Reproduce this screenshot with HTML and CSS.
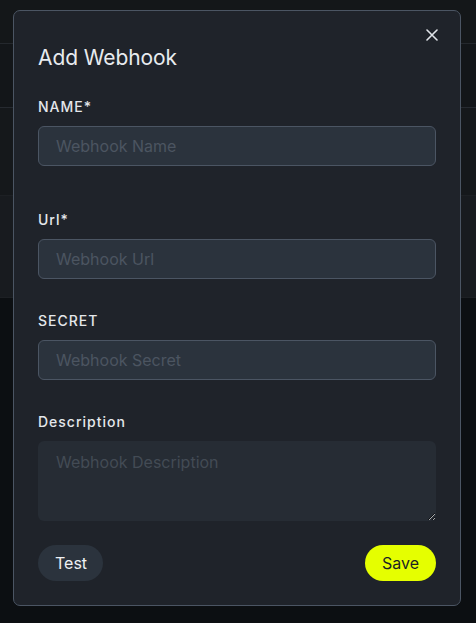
FILE: index.html
```html
<!DOCTYPE html>
<html lang="en">
<head>
<meta charset="utf-8">
<title>Add Webhook</title>
<link rel="stylesheet" href="styles.css">
</head>
<body>
<div class="stage">
  <div class="page">
    <div class="page-header"></div>
    <div class="page-toolbar"></div>
    <div class="page-row page-row-head"></div>
    <div class="page-row page-row-body"></div>
    <div class="page-rest"></div>
  </div>
  <div class="modal" role="dialog" aria-labelledby="modal-title">
    <button class="close" type="button" aria-label="Close">
      <svg viewBox="0 0 12 12" width="12" height="12" aria-hidden="true">
        <path d="M1 1 L11 11 M11 1 L1 11" stroke="#dfe3e8" stroke-width="1.6" stroke-linecap="round" fill="none"/>
      </svg>
    </button>
    <h2 class="title" id="modal-title">Add Webhook</h2>
    <div class="field field-first">
      <label class="label label-caps">NAME*</label>
      <input class="input" type="text" placeholder="Webhook Name">
    </div>
    <div class="field">
      <label class="label">Url*</label>
      <input class="input" type="text" placeholder="Webhook Url">
    </div>
    <div class="field">
      <label class="label label-caps">SECRET</label>
      <input class="input" type="text" placeholder="Webhook Secret">
    </div>
    <div class="field field-last">
      <label class="label">Description</label>
      <textarea class="textarea" placeholder="Webhook Description"></textarea>
    </div>
    <div class="actions">
      <button class="btn btn-test" type="button">Test</button>
      <button class="btn btn-save" type="button">Save</button>
    </div>
  </div>
</div>
</body>
</html>
```

FILE: styles.css
```css
* { box-sizing: border-box; }
html, body { margin: 0; padding: 0; }
body {
  width: 476px;
  height: 623px;
  overflow: hidden;
  background: #0c0f12;
  font-family: Inter, "Noto Sans", sans-serif;
}
.stage {
  display: grid;
  width: 476px;
  height: 623px;
}
.page, .modal { grid-area: 1 / 1; }

.page {
  display: flex;
  flex-direction: column;
}
.page-header {
  height: 44px;
  background: #141719;
  border-bottom: 1px solid #24282d;
}
.page-toolbar {
  height: 64px;
  background: #131619;
  border-bottom: 1px solid #262a30;
}
.page-row { background: #15181b; }
.page-row-head { height: 87px; }
.page-row-body {
  height: 103px;
  background: #181b1f;
  border-top: 1px solid #1d2024;
  border-bottom: 1px solid #1d2024;
}
.page-rest { flex: 1; background: #0c0f12; }

.modal {
  align-self: start;
  margin: 10px 15px 0 13px;
  width: 448px;
  height: 596px;
  background: #1f232a;
  border: 1px solid #4b5563;
  border-radius: 7px;
  padding: 18px 24px 24px;
  display: flex;
  flex-direction: column;
}
.close {
  align-self: flex-end;
  margin-right: -2px;
  width: 12px;
  height: 12px;
  padding: 0;
  border: 0;
  background: none;
  display: block;
  line-height: 0;
}
.close svg { display: block; }
.title {
  margin: 3px 0 25px;
  font-size: 21px;
  line-height: 28px;
  font-weight: 400;
  color: #e8ebef;
  letter-spacing: -0.1px;
}
.field {
  display: flex;
  flex-direction: column;
  margin-bottom: 32px;
}
.field-first { margin-bottom: 44px; }
.field-last { margin-bottom: 24px; }
.label {
  font-size: 14px;
  line-height: 20px;
  font-weight: 500;
  color: #e4e7eb;
  letter-spacing: 1px;
  margin-bottom: 9px;
}
.input {
  height: 40px;
  width: 100%;
  background: #2b333d;
  border: 1px solid #4b5563;
  border-radius: 6px;
  padding: 0 17px;
  font-family: Inter, "Noto Sans", sans-serif;
  font-size: 16px;
  color: #e4e7eb;
  outline: none;
}
.input::placeholder { color: #4c5561; }
.textarea {
  height: 80px;
  width: 100%;
  background: #262c34;
  border: 0;
  border-radius: 6px;
  padding: 11px 18px;
  font-family: Inter, "Noto Sans", sans-serif;
  font-size: 16px;
  line-height: 20px;
  color: #e4e7eb;
  outline: none;
  resize: vertical;
}
.textarea::placeholder { color: #434b55; }
.actions {
  display: flex;
  justify-content: space-between;
  align-items: center;
}
.btn {
  height: 36px;
  border: 0;
  border-radius: 18px;
  font-family: Inter, "Noto Sans", sans-serif;
  font-size: 16px;
  line-height: 20px;
  padding: 0 17px;
}
.btn-test {
  width: 65px;
  background: #2b333d;
  color: #eef0f3;
}
.btn-save {
  width: 71px;
  background: #e5ff00;
  color: #1c1f24;
}
```
